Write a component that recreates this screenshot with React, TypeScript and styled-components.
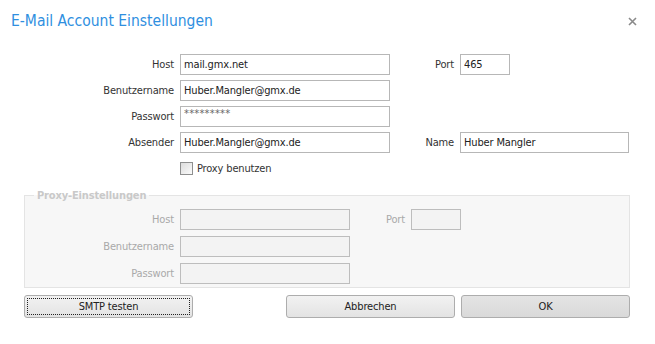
import React from "react";
import styled, { createGlobalStyle } from "styled-components";

const Global = createGlobalStyle`
  html, body { margin: 0; padding: 0; background: #ffffff; }
  body { font-family: "DejaVu Sans Condensed", "DejaVu Sans", sans-serif; font-size: 11px; letter-spacing: -0.15px; color: #333; }
  * { box-sizing: border-box; }
`;

const Dialog = styled.div`
  width: 655px;
  height: 344px;
  display: flex;
  flex-direction: column;
  background: #fff;
`;

const Header = styled.div`
  display: flex;
  align-items: center;
  justify-content: space-between;
  height: 20px;
  margin-top: 11px;
  padding: 0 18px 0 11px;
`;

const Title = styled.h1`
  margin: 0;
  font-size: 15.5px;
  line-height: 20px;
  font-weight: normal;
  letter-spacing: 0;
  color: #2f8fdf;
`;

const Close = styled.button`
  border: 0;
  background: transparent;
  padding: 0;
  width: 9px;
  height: 9px;
  display: flex;
  cursor: pointer;
`;

const Form = styled.div`
  display: grid;
  grid-template-columns: 174px 210px 58px 169px;
  grid-auto-rows: 21px;
  column-gap: 6px;
  row-gap: 5px;
  margin-top: 23px;
`;

const Label = styled.label<{ $disabled?: boolean }>`
  display: flex;
  align-items: center;
  justify-content: flex-end;
  color: ${(p) => (p.$disabled ? "#a9a9a9" : "#333")};
  white-space: nowrap;
`;

const Field = styled.input<{ $w?: number }>`
  width: ${(p) => (p.$w ? `${p.$w}px` : "100%")};
  height: 21px;
  margin: 0;
  border: 1px solid #b7b7b7;
  border-radius: 0;
  padding: 0 3px;
  font: inherit;
  letter-spacing: inherit;
  color: #222;
  background: #fff;
  outline: none;
  &:disabled {
    background: #f3f3f3;
    border-color: #bdbdbd;
  }
`;

const Secret = styled(Field)`
  font-size: 11px;
  letter-spacing: 0.2px;
  color: #666;
  padding-bottom: 6px;
`;

const CheckRow = styled.label`
  grid-column: 2;
  display: flex;
  align-items: center;
  gap: 4px;
  color: #333;
`;

const Box = styled.span`
  width: 13px;
  height: 13px;
  border: 1px solid #8e8f8f;
  background: linear-gradient(135deg, #dcdcdc 0%, #fbfbfb 100%);
`;

const Group = styled.fieldset`
  margin: 10px 25px 0 24px;
  padding: 7px 0 3px 0;
  border: 1px solid #e4e4e4;
  background: #f7f7f7;
  min-width: 0;
`;

const Legend = styled.legend`
  margin-left: 9px;
  padding: 0 3px;
  font-weight: bold;
  line-height: 13px;
  color: #c9c9c9;
`;

const GroupGrid = styled.div`
  display: grid;
  grid-template-columns: 149px 170px 49px 50px;
  grid-auto-rows: 21px;
  column-gap: 6px;
  row-gap: 6px;
`;

const Buttons = styled.div`
  display: flex;
  justify-content: space-between;
  margin-top: 7px;
  padding: 0 25px 0 24px;
`;

const Right = styled.div`
  display: flex;
  gap: 6px;
`;

const Btn = styled.button<{ $primary?: boolean; $focus?: boolean }>`
  width: 169px;
  height: 23px;
  margin: 0;
  padding: 0;
  font: inherit;
  letter-spacing: inherit;
  color: #222;
  border: 1px solid #adadad;
  border-radius: 3px;
  background: ${(p) =>
    p.$primary
      ? "linear-gradient(#e4e4e4, #d9d9d9)"
      : "linear-gradient(#f2f2f2, #e3e3e3)"};
  outline: ${(p) => (p.$focus ? "1px dotted #222" : "none")};
  outline-offset: -4px;
  cursor: pointer;
`;

export default function App() {
  return (
    <Dialog>
      <Global />
      <Header>
        <Title>E-Mail Account Einstellungen</Title>
        <Close aria-label="Schließen">
          <svg width="9" height="9" viewBox="0 0 9 9">
            <path d="M1 1L8 8M8 1L1 8" stroke="#8a8a8a" strokeWidth="1.6" />
          </svg>
        </Close>
      </Header>
      <Form>
        <Label>Host</Label>
        <Field defaultValue="mail.gmx.net" />
        <Label>Port</Label>
        <Field $w={50} defaultValue="465" />

        <Label>Benutzername</Label>
        <Field defaultValue="Huber.Mangler@gmx.de" />
        <span />
        <span />

        <Label>Passwort</Label>
        <Secret defaultValue="*********" />
        <span />
        <span />

        <Label>Absender</Label>
        <Field defaultValue="Huber.Mangler@gmx.de" />
        <Label>Name</Label>
        <Field defaultValue="Huber Mangler" />

        <CheckRow>
          <Box />
          Proxy benutzen
        </CheckRow>
      </Form>
      <Group disabled>
        <Legend>Proxy-Einstellungen</Legend>
        <GroupGrid>
          <Label $disabled>Host</Label>
          <Field disabled />
          <Label $disabled>Port</Label>
          <Field disabled />

          <Label $disabled>Benutzername</Label>
          <Field disabled />
          <span />
          <span />

          <Label $disabled>Passwort</Label>
          <Field disabled />
        </GroupGrid>
      </Group>
      <Buttons>
        <Btn $focus>SMTP testen</Btn>
        <Right>
          <Btn>Abbrechen</Btn>
          <Btn $primary>OK</Btn>
        </Right>
      </Buttons>
    </Dialog>
  );
}
